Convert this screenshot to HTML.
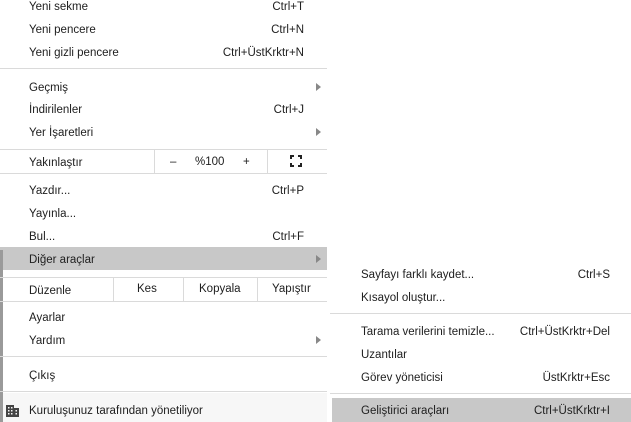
<!DOCTYPE html>
<html><head><meta charset="utf-8"><style>
*{margin:0;padding:0;box-sizing:border-box}
body{width:631px;height:422px;background:#fff;position:relative;overflow:hidden;font-family:"Segoe UI","Liberation Sans",sans-serif;font-size:11.5px;color:#202020}
.t{position:absolute;white-space:nowrap;line-height:14px}
.r{position:absolute;white-space:nowrap;line-height:14px;text-align:right}
.h{position:absolute;height:1px;background:#dadada}
.v{position:absolute;width:1px;background:#dadada}
.a{position:absolute;width:0;height:0;border-top:4px solid transparent;border-bottom:4px solid transparent;border-left:5px solid #888}
</style></head><body>
<div style="position:absolute;left:0;top:247px;width:327px;height:23px;background:#c8c8c8"></div>
<div style="position:absolute;left:0;top:393px;width:327px;height:29px;background:#f7f7f7"></div>
<div style="position:absolute;left:0;top:250px;width:3px;height:172px;background:#9a9a9a"></div>
<div style="position:absolute;left:332px;top:398px;width:299px;height:24px;background:#c8c8c8"></div>
<div style="position:absolute;left:327px;top:393px;width:5px;height:29px;background:#fff"></div>

<div class="t" style="left:29px;top:0px">Yeni sekme</div><div class="r" style="right:327px;top:0px">Ctrl+T</div>
<div class="t" style="left:29px;top:23px">Yeni pencere</div><div class="r" style="right:327px;top:23px">Ctrl+N</div>
<div class="t" style="left:29px;top:46px">Yeni gizli pencere</div><div class="r" style="right:327px;top:46px">Ctrl+ÜstKrktr+N</div>
<div class="h" style="left:0;top:68px;width:327px"></div>
<div class="t" style="left:29px;top:81px">Geçmiş</div><div class="a" style="left:316px;top:83px"></div>
<div class="t" style="left:29px;top:103px">İndirilenler</div><div class="r" style="right:327px;top:103px">Ctrl+J</div>
<div class="t" style="left:29px;top:126px">Yer İşaretleri</div><div class="a" style="left:316px;top:128px"></div>
<div class="h" style="left:0;top:149px;width:327px"></div>
<div class="t" style="left:29px;top:156px">Yakınlaştır</div>
<div class="v" style="left:154px;top:149px;height:24px"></div>
<div class="t" style="left:170px;top:155px">–</div>
<div class="t" style="left:195px;top:155px">%100</div>
<div class="t" style="left:243px;top:155px">+</div>
<div class="v" style="left:267px;top:149px;height:24px"></div>
<svg style="position:absolute;left:290px;top:155px" width="12" height="12" viewBox="0 0 12 12" fill="none" stroke="#222" stroke-width="2"><path d="M1 4V1H4M8 1H11V4M11 8V11H8M4 11H1V8"/></svg>
<div class="h" style="left:0;top:173px;width:327px"></div>
<div class="t" style="left:29px;top:184px">Yazdır...</div><div class="r" style="right:327px;top:184px">Ctrl+P</div>
<div class="t" style="left:29px;top:207px">Yayınla...</div>
<div class="t" style="left:29px;top:230px">Bul...</div><div class="r" style="right:327px;top:230px">Ctrl+F</div>
<div class="t" style="left:29px;top:253px">Diğer araçlar</div><div class="a" style="left:316px;top:255px"></div>
<div class="h" style="left:0;top:277px;width:327px"></div>
<div class="t" style="left:29px;top:284px">Düzenle</div>
<div class="v" style="left:113px;top:277px;height:24px"></div>
<div class="t" style="left:137px;top:282px">Kes</div>
<div class="v" style="left:183px;top:277px;height:24px"></div>
<div class="t" style="left:199px;top:282px">Kopyala</div>
<div class="v" style="left:257px;top:277px;height:24px"></div>
<div class="t" style="left:272px;top:282px">Yapıştır</div>
<div class="h" style="left:0;top:301px;width:327px"></div>
<div class="t" style="left:29px;top:311px">Ayarlar</div>
<div class="t" style="left:29px;top:334px">Yardım</div><div class="a" style="left:316px;top:336px"></div>
<div class="h" style="left:0;top:356px;width:327px"></div>
<div class="t" style="left:29px;top:369px">Çıkış</div>
<div class="h" style="left:0;top:391px;width:327px"></div>
<svg style="position:absolute;left:6px;top:405px" width="13" height="12" viewBox="0 0 13 12" fill="#444"><path d="M0 0h8v12H0zM8 3h5v9H8z"/><g fill="#f7f7f7"><rect x="2" y="2" width="1.5" height="1.5"/><rect x="5" y="2" width="1.5" height="1.5"/><rect x="2" y="5" width="1.5" height="1.5"/><rect x="5" y="5" width="1.5" height="1.5"/><rect x="2" y="8" width="1.5" height="1.5"/><rect x="5" y="8" width="1.5" height="1.5"/><rect x="9.5" y="5" width="1.5" height="1.5"/><rect x="9.5" y="8" width="1.5" height="1.5"/></g></svg>
<div class="t" style="left:29px;top:404px">Kuruluşunuz tarafından yönetiliyor</div>

<div class="t" style="left:361px;top:268px">Sayfayı farklı kaydet...</div><div class="r" style="right:21px;top:268px">Ctrl+S</div>
<div class="t" style="left:361px;top:291px">Kısayol oluştur...</div>
<div class="h" style="left:330px;top:313px;width:301px"></div>
<div class="t" style="left:361px;top:325px">Tarama verilerini temizle...</div><div class="r" style="right:21px;top:325px">Ctrl+ÜstKrktr+Del</div>
<div class="t" style="left:361px;top:348px">Uzantılar</div>
<div class="t" style="left:361px;top:371px">Görev yöneticisi</div><div class="r" style="right:21px;top:371px">ÜstKrktr+Esc</div>
<div class="h" style="left:330px;top:393px;width:301px"></div>
<div class="t" style="left:361px;top:404px">Geliştirici araçları</div><div class="r" style="right:21px;top:404px">Ctrl+ÜstKrktr+I</div>
</body></html>
